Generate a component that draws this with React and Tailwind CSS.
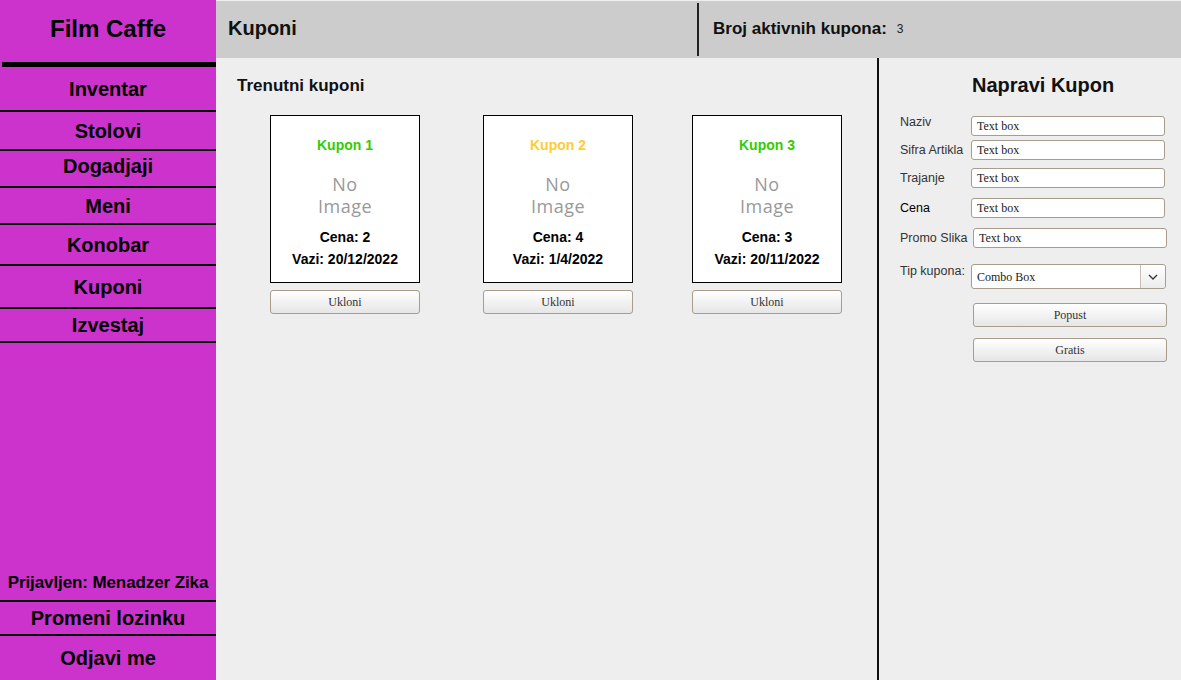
export default function App() {
  const navItems = [
    { label: "Inventar", h: "h-[43px]" },
    { label: "Stolovi", h: "h-[37px]" },
    { label: "Dogadjaji", h: "h-[35px] pb-[6px]" },
    { label: "Meni", h: "h-[35px]" },
    { label: "Konobar", h: "h-[39px]" },
    { label: "Kuponi", h: "h-[41px]" },
    { label: "Izvestaj", h: "h-[32px]" },
  ];

  const coupons = [
    { name: "Kupon 1", color: "text-[#33cc00]", price: 2, valid: "20/12/2022", ml: "ml-[54px]" },
    { name: "Kupon 2", color: "text-[#ffcc33]", price: 4, valid: "1/4/2022", ml: "ml-[63px]" },
    { name: "Kupon 3", color: "text-[#33cc00]", price: 3, valid: "20/11/2022", ml: "ml-[59px]" },
  ];

  const fields = [
    { label: "Naziv", mt: "mt-[21px]", labelCls: "self-start -mt-[1px]", inputCls: "ml-0" },
    { label: "Sifra Artikla", mt: "mt-[4px]", labelCls: "", inputCls: "ml-0" },
    { label: "Trajanje", mt: "mt-[8px]", labelCls: "", inputCls: "ml-0" },
    { label: "Cena", mt: "mt-[10px]", labelCls: "text-black", inputCls: "ml-0" },
    { label: "Promo Slika", mt: "mt-[10px]", labelCls: "", inputCls: "ml-[2px]" },
  ];

  const sans = { fontFamily: "'Liberation Sans', Arial, sans-serif" };
  const serif = { fontFamily: "'Liberation Serif', 'Times New Roman', serif" };
  const btn =
    "h-[24px] rounded-[3px] border border-[#a89c8c] bg-gradient-to-b from-white to-[#e6e6e6] text-[12px] text-[#333]";

  return (
    <div className="flex w-[1181px] h-[680px] overflow-hidden bg-[#eeeeee]" style={sans}>
      {/* Sidebar */}
      <div className="flex flex-col w-[216px] h-full bg-[#cc33cc] text-black font-bold shrink-0">
        <div className="h-[62px] flex items-center justify-center text-[24px] pb-[5px]">
          Film Caffe
        </div>
        <div className="h-[5px] ml-[2px] bg-black" />
        {navItems.map((item) => (
          <div key={item.label}>
            <div className={`${item.h} flex items-center justify-center text-[20px]`}>
              {item.label}
            </div>
            <div className="h-[2px] bg-black" />
          </div>
        ))}
        <div className="flex-1" />
        <div className="h-[40px] flex items-center justify-center text-[17px] pt-[5px] whitespace-nowrap tracking-[-0.1px]">
          Prijavljen: Menadzer Zika
        </div>
        <div className="h-[2px] bg-black" />
        <div className="h-[32px] flex items-center justify-center text-[20px]">Promeni lozinku</div>
        <div className="h-[2px] bg-black" />
        <div className="h-[44px] flex items-center justify-center text-[20px]">Odjavi me</div>
      </div>

      {/* Main */}
      <div className="flex flex-col flex-1 h-full">
        <div className="h-[57px] mt-[1px] bg-[#cccccc] flex items-stretch shrink-0">
          <div className="w-[481px] pl-[12px] pt-[12px] text-[20px] font-semibold text-[#111]">Kuponi</div>
          <div className="w-[2px] my-[2px] bg-[#222]" />
          <div className="flex items-center pl-[14px] pb-[1px]">
            <span className="text-[17px] font-bold text-[#111]">Broj aktivnih kupona:</span>
            <span className="text-[12px] ml-[10px] text-[#222]">3</span>
          </div>
        </div>

        <div className="flex flex-1">
          {/* Coupon list */}
          <div className="w-[661px] flex flex-col">
            <div className="pl-[21px] pt-[18px] text-[17px] leading-[20px] font-semibold text-[#111]">
              Trenutni kuponi
            </div>
            <div className="flex mt-[19px]">
              {coupons.map((c) => (
                <div key={c.name} className={`${c.ml} w-[150px] flex flex-col`}>
                  <div className="h-[168px] bg-white border border-black flex flex-col items-center">
                    <div className={`mt-[21px] text-[14px] leading-[16px] font-bold ${c.color}`}>{c.name}</div>
                    <div
                      className="mt-[20px] text-[18px] leading-[22px] text-[#999999] text-center tracking-[0.5px]"
                      style={{ fontFamily: "'Open Sans', sans-serif" }}
                    >
                      No
                      <br />
                      Image
                    </div>
                    <div className="mt-[12px] text-[14px] leading-[16px] font-bold">Cena: {c.price}</div>
                    <div className="mt-[6px] text-[14px] leading-[16px] font-bold">Vazi: {c.valid}</div>
                  </div>
                  <button className={`mt-[7px] w-[150px] ${btn}`} style={serif}>
                    Ukloni
                  </button>
                </div>
              ))}
            </div>
          </div>

          <div className="w-[2px] bg-[#111]" />

          {/* Create coupon */}
          <div className="flex-1 flex flex-col pl-[21px]">
            <div className="pl-[72px] pt-[17px] text-[20px] leading-[20px] font-bold text-[#111]">
              Napravi Kupon
            </div>
            {fields.map((f) => (
              <div key={f.label} className={`${f.mt} flex items-center h-[20px]`}>
                <div className={`w-[71px] text-[12.5px] leading-[14px] text-[#333] whitespace-nowrap ${f.labelCls}`}>
                  {f.label}
                </div>
                <div
                  className={`${f.inputCls} w-[194px] h-[20px] bg-white border border-[#a89c8c] rounded-[3px] pl-[5px] flex items-center text-[12px] text-[#222]`}
                  style={serif}
                >
                  Text box
                </div>
              </div>
            ))}
            <div className="mt-[16px] flex items-start h-[25px]">
              <div className="w-[71px] text-[12.5px] leading-[14px] text-[#333] whitespace-nowrap">Tip kupona:</div>
              <div className="w-[195px] h-[25px] bg-white border border-[#a89c8c] rounded-[3px] flex">
                <div className="flex-1 pl-[5px] flex items-center text-[12px] text-[#222]" style={serif}>
                  Combo Box
                </div>
                <div className="w-[25px] border-l border-[#c8c0b4] bg-gradient-to-b from-white to-[#ececec] flex items-center justify-center rounded-r-[3px]">
                  <svg width="10" height="6" viewBox="0 0 10 6" fill="none">
                    <path d="M1 1l4 4 4-4" stroke="#333" strokeWidth="1.3" />
                  </svg>
                </div>
              </div>
            </div>
            <button className={`mt-[14px] ml-[73px] w-[194px] ${btn}`} style={serif}>
              Popust
            </button>
            <button className={`mt-[11px] ml-[73px] w-[194px] ${btn}`} style={serif}>
              Gratis
            </button>
          </div>
        </div>
      </div>
    </div>
  );
}
